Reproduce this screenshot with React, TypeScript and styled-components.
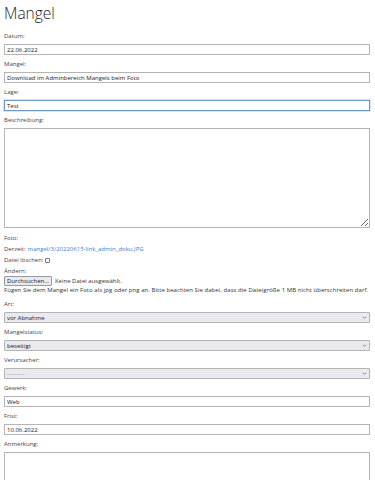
import React from "react";
import styled, { createGlobalStyle } from "styled-components";

const GlobalStyle = createGlobalStyle`
  html, body {
    margin: 0;
    padding: 0;
    background: #fff;
  }
  body {
    font-family: "Open Sans", "Noto Sans", sans-serif;
    color: #333;
  }
`;

const Page = styled.div`
  padding: 0 5px 0 4px;
  width: 375px;
  box-sizing: border-box;
`;

const Title = styled.h1`
  margin: 1px 0 7px;
  font-size: 15.5px;
  line-height: 24px;
  font-weight: 300;
  color: #222;
`;

const Field = styled.div`
  display: flex;
  flex-direction: column;
  margin-bottom: 5px;
`;

const Label = styled.label`
  font-size: 6px;
  line-height: 9px;
  margin-bottom: 3px;
  color: #444;
`;

const TextInput = styled.input<{ $focused?: boolean }>`
  display: block;
  box-sizing: border-box;
  width: 100%;
  height: 11px;
  margin: 0;
  padding: 0 2px;
  font-family: inherit;
  font-size: 6px;
  color: #1a1a1a;
  background: #fff;
  border: 1px solid ${(p) => (p.$focused ? "#6f97c2" : "#b4b4b4")};
  box-shadow: ${(p) => (p.$focused ? "0 0 0 1px #d6e6f5" : "none")};
  outline: none;
`;

const TextArea = styled.textarea<{ $rows: number }>`
  display: block;
  box-sizing: border-box;
  width: 100%;
  height: ${(p) => p.$rows}px;
  margin: 0;
  padding: 2px;
  font-family: inherit;
  font-size: 6px;
  border: 1px solid #b4b4b4;
  resize: vertical;
`;

const SelectWrap = styled.div`
  position: relative;
  height: 11px;
`;

const Select = styled.select<{ $muted?: boolean }>`
  display: block;
  box-sizing: border-box;
  appearance: none;
  width: 100%;
  height: 11px;
  margin: 0;
  padding: 0 2px;
  font-family: inherit;
  font-size: 6px;
  font-weight: ${(p) => (p.$muted ? 400 : 500)};
  color: ${(p) => (p.$muted ? "#888" : "#1a1a1a")};
  background: #e9e9ee;
  border: 1px solid #b4b4b4;
  border-radius: 1px;
  outline: none;
`;

const Chevron = styled.svg`
  position: absolute;
  right: 3px;
  top: 3px;
  width: 5px;
  height: 5px;
  pointer-events: none;
`;

const Line = styled.div<{ $h?: number }>`
  font-size: 6px;
  line-height: ${(p) => p.$h ?? 11}px;
  color: #444;
  display: flex;
  align-items: center;
  gap: 2px;
`;

const Link = styled.a`
  color: #3b7dd8;
  text-decoration: none;
`;

const Check = styled.input`
  appearance: none;
  width: 5px;
  height: 5px;
  margin: 0;
  border: 1px solid #777;
  border-radius: 1px;
  background: #fff;
`;

const FileRow = styled.div`
  display: flex;
  align-items: center;
  gap: 3px;
  height: 10px;
  font-size: 6px;
  color: #333;
`;

const FileButton = styled.button`
  height: 10px;
  padding: 0 2px;
  font-family: inherit;
  font-size: 6px;
  line-height: 8px;
  color: #222;
  background: #e9e9ee;
  border: 1px solid #9a9a9a;
  border-radius: 1px;
`;

const Hint = styled.div`
  font-size: 6px;
  line-height: 9px;
  letter-spacing: 0.05px;
  color: #333;
  white-space: nowrap;
  margin-bottom: 5px;
`;

const FotoBlock = styled.div`
  margin-top: 1px;
`;

const DropSelect = ({ value, muted }: { value: string; muted?: boolean }) => (
  <SelectWrap>
    <Select $muted={muted} defaultValue={value}>
      <option>{value}</option>
    </Select>
    <Chevron viewBox="0 0 10 10">
      <path d="M2 3.5 L5 6.5 L8 3.5" fill="none" stroke="#555" strokeWidth="1.4" />
    </Chevron>
  </SelectWrap>
);

export default function App() {
  return (
    <Page>
      <GlobalStyle />
      <Title>Mangel</Title>
      <Field>
        <Label>Datum:</Label>
        <TextInput defaultValue="22.06.2022" />
      </Field>
      <Field>
        <Label>Mangel:</Label>
        <TextInput defaultValue="Download im Adminbereich Mangels beim Foto" />
      </Field>
      <Field>
        <Label>Lage:</Label>
        <TextInput $focused defaultValue="Test" />
      </Field>
      <Field>
        <Label>Beschreibung:</Label>
        <TextArea $rows={100} />
      </Field>
      <FotoBlock>
        <Line>Foto:</Line>
        <Line>
          Derzeit: <Link href="#">mangel/3/20220615-link_admin_doku.JPG</Link>
        </Line>
        <Line>
          Datei löschen: <Check type="checkbox" />
        </Line>
        <Line $h={10}>Ändern:</Line>
        <FileRow>
          <FileButton>Durchsuchen...</FileButton>
          <span>Keine Datei ausgewählt.</span>
        </FileRow>
        <Hint>
          Fügen Sie dem Mangel ein Foto als jpg oder png an. Bitte beachten Sie dabei, dass die Dateigröße 1 MB nicht überschreiten darf.
        </Hint>
      </FotoBlock>
      <Field>
        <Label>Art:</Label>
        <DropSelect value="vor Abnahme" />
      </Field>
      <Field>
        <Label>Mangelstatus:</Label>
        <DropSelect value="beseitigt" />
      </Field>
      <Field>
        <Label>Verursacher:</Label>
        <DropSelect value="---------" muted />
      </Field>
      <Field>
        <Label>Gewerk:</Label>
        <TextInput defaultValue="Web" />
      </Field>
      <Field>
        <Label>Frist:</Label>
        <TextInput defaultValue="10.06.2022" />
      </Field>
      <Field>
        <Label>Anmerkung:</Label>
        <TextArea $rows={100} />
      </Field>
    </Page>
  );
}
